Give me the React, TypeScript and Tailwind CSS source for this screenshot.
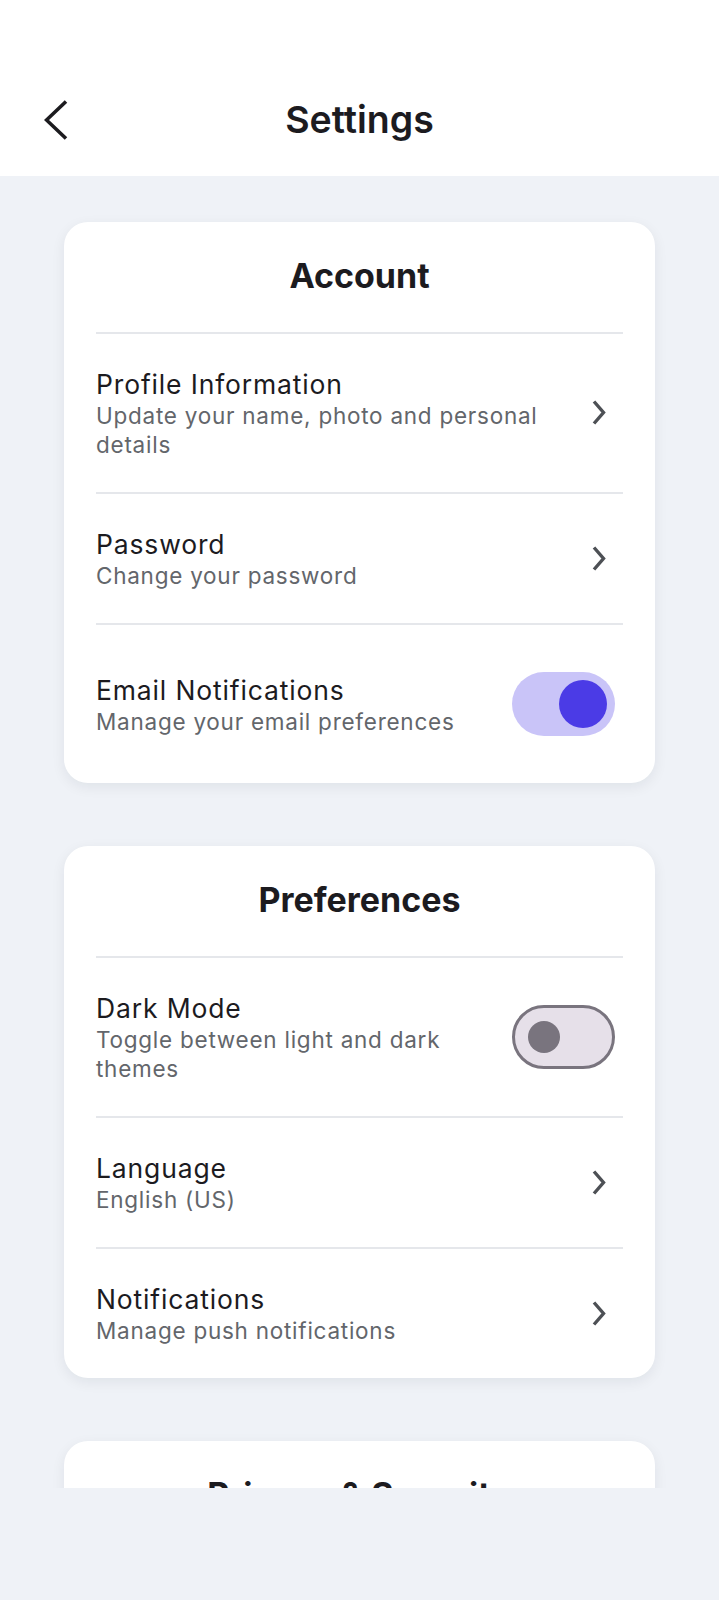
import React from 'react'

type Row = {
  title: string
  description: string
  kind: 'link' | 'toggle'
  on?: boolean
}

const sections: { heading: string; rows: Row[] }[] = [
  {
    heading: 'Account',
    rows: [
      { title: 'Profile Information', description: 'Update your name, photo and personal details', kind: 'link' },
      { title: 'Password', description: 'Change your password', kind: 'link' },
      { title: 'Email Notifications', description: 'Manage your email preferences', kind: 'toggle', on: true },
    ],
  },
  {
    heading: 'Preferences',
    rows: [
      { title: 'Dark Mode', description: 'Toggle between light and dark themes', kind: 'toggle', on: false },
      { title: 'Language', description: 'English (US)', kind: 'link' },
      { title: 'Notifications', description: 'Manage push notifications', kind: 'link' },
    ],
  },
  {
    heading: 'Privacy & Security',
    rows: [
      { title: 'Two-Factor Authentication', description: 'Add an extra layer of security', kind: 'toggle', on: false },
      { title: 'Privacy Settings', description: 'Control who can see your information', kind: 'link' },
    ],
  },
]

const Chevron = () => (
  <svg width="16" height="28" viewBox="0 0 16 28" fill="none" className="shrink-0 mr-[16px]" stroke="#4d5055" strokeWidth="3.4">
    <polyline points="3,2.5 12.5,13.5 3,24.5" />
  </svg>
)

const Toggle = ({ on }: { on?: boolean }) => (
  <div className="shrink-0 py-[14px] mr-[8px]">
    {on ? (
      <div className="w-[103px] h-[64px] rounded-full bg-[#c9c4f8] flex items-center justify-end pr-[8px]">
        <div className="w-[48px] h-[48px] rounded-full bg-[#4b3be6]" />
      </div>
    ) : (
      <div className="w-[103px] h-[64px] rounded-full bg-[#e6e0e9] border-[3px] border-[#79747e] flex items-center pl-[13px]">
        <div className="w-[32px] h-[32px] rounded-full bg-[#79747e]" />
      </div>
    )}
  </div>
)

const SettingsRow = ({ row }: { row: Row }) => (
  <div className="flex items-center gap-4 py-[33px] border-t-2 border-[#e5e7eb]">
    <div className="flex-1 min-w-0 pr-[20px]">
      <div className="text-[26.5px] leading-[34px] tracking-[0.85px] text-[#1c1b1f]">{row.title}</div>
      <div className="text-[22.5px] leading-[29px] tracking-[0.75px] text-[#63666b]">{row.description}</div>
    </div>
    {row.kind === 'toggle' ? <Toggle on={row.on} /> : <Chevron />}
  </div>
)

export default function App() {
  return (
    <div className="w-[719px] h-[1600px] bg-[#eff2f7] overflow-hidden" style={{ fontFamily: 'Inter, "Noto Sans", sans-serif' }}>
      {/* Top bar */}
      <header className="bg-white h-[176px] pt-[64px]">
        <div className="h-[112px] grid grid-cols-[1fr_auto_1fr] items-center">
          <div className="pl-[44px] flex items-center">
            <svg width="24" height="40" viewBox="0 0 24 40" fill="none" stroke="#1c1b1f" strokeWidth="3.6">
              <polyline points="22,1.5 2.5,20 22,38.5" />
            </svg>
          </div>
          <h1 className="text-[37.5px] font-semibold text-[#1c1b1f]">Settings</h1>
          <div />
        </div>
      </header>

      {/* Scrollable content */}
      <main className="h-[1312px] overflow-hidden px-[64px] pt-[46px] flex flex-col gap-[63px]">
        {sections.map((section) => (
          <section
            key={section.heading}
            className="shrink-0 bg-white rounded-[24px] px-[32px] pt-[32px] shadow-[0_4px_14px_rgba(15,23,42,0.07)]"
          >
            <h2 className="h-[44px] mb-[34px] text-center text-[34px] leading-[44px] font-bold text-[#1c1b1f]">
              {section.heading}
            </h2>
            {section.rows.map((row) => (
              <SettingsRow key={row.title} row={row} />
            ))}
          </section>
        ))}
      </main>
    </div>
  )
}
